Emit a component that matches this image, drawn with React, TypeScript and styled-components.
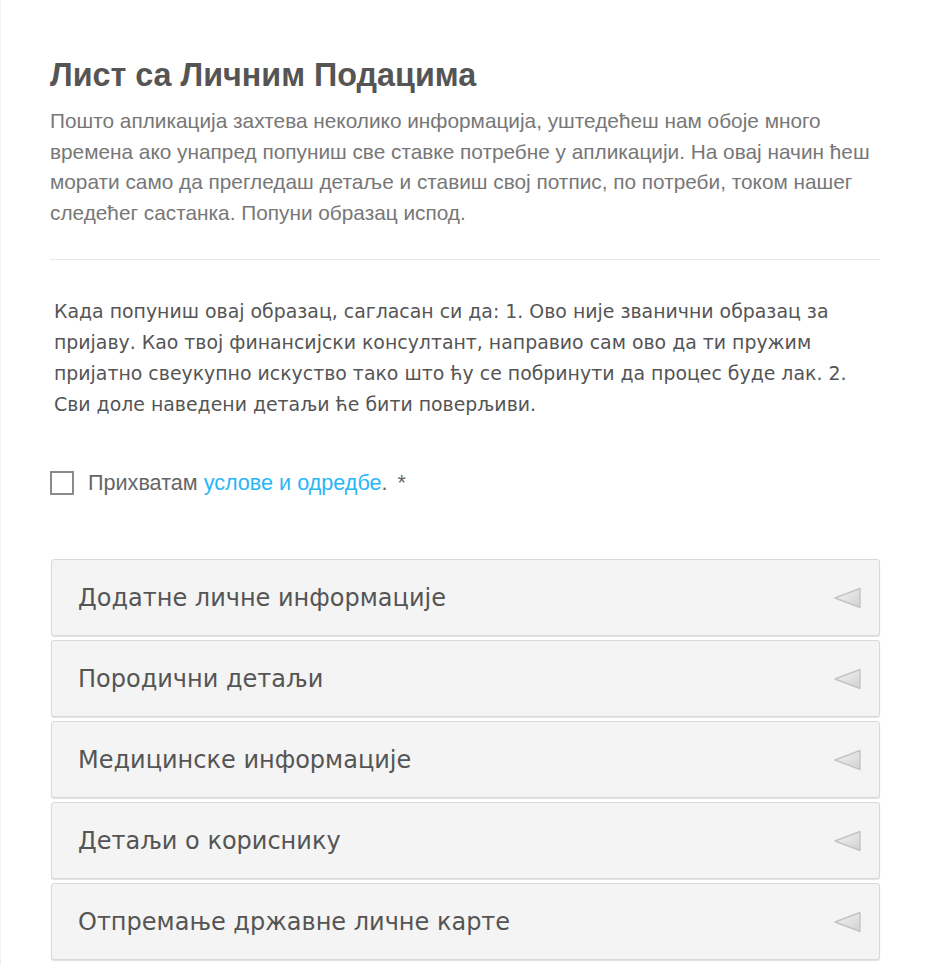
import styled, { createGlobalStyle } from 'styled-components';

const GlobalStyle = createGlobalStyle`
    html, body {
        margin: 0;
        padding: 0;
        background: #fff;
    }
`;

const Page = styled.div`
    min-height: 965px;
    box-sizing: border-box;
    border-left: 1px dotted #e6e6e6;
    padding: 57px 50px 0 49px;
    width: 930px;
`;

const Title = styled.h1`
    margin: 0;
    font-family: "Liberation Sans", Arial, sans-serif;
    font-weight: 700;
    font-size: 32.3px;
    line-height: 36px;
    color: #555;
`;

const Intro = styled.p`
    margin: 13px 0 0;
    font-family: "Liberation Sans", Arial, sans-serif;
    font-size: 20.8px;
    line-height: 30.5px;
    color: #777;
`;

const Divider = styled.hr`
    margin: 31px 0 0;
    border: none;
    border-top: 1px solid #e8e8e8;
`;

const Terms = styled.p`
    margin: 36px 0 0;
    padding-left: 4px;
    font-family: "DejaVu Sans", Verdana, sans-serif;
    font-size: 18.9px;
    line-height: 31px;
    color: #555;
`;

const AgreeRow = styled.label`
    display: flex;
    align-items: center;
    gap: 14px;
    margin-top: 51px;
    font-family: "Liberation Sans", Arial, sans-serif;
    font-size: 21.6px;
    line-height: 24px;
    color: #666;
`;

const Box = styled.span`
    width: 20px;
    height: 20px;
    border: 2px solid #8a8a8a;
    background: #fff;
    flex: none;
`;

const TermsLink = styled.a`
    color: #29b6f6;
    text-decoration: none;
`;

const Star = styled.span`
    margin-left: 10px;
`;

const Accordion = styled.div`
    display: flex;
    flex-direction: column;
    gap: 4px;
    margin-top: 64px;
    padding-left: 1px;
`;

const Panel = styled.div`
    display: flex;
    align-items: center;
    justify-content: space-between;
    height: 75px;
    padding: 0 16px 0 26px;
    background: #f4f4f4;
    border: 1px solid #d9d9d9;
    border-radius: 3px;
    box-shadow: 0 1px 1px rgba(0, 0, 0, 0.12);
    font-family: "DejaVu Sans", Verdana, sans-serif;
    font-size: 24px;
    color: #555;
    cursor: pointer;
`;

const Arrow = () => (
    <svg width="30" height="24" viewBox="0 0 30 24">
        <defs>
            <linearGradient id="arr" x1="0" y1="0" x2="1" y2="1">
                <stop offset="0" stopColor="#f6f6f6" />
                <stop offset="1" stopColor="#d0d0d0" />
            </linearGradient>
        </defs>
        <path d="M2 12 L27 2.5 L27 21.5 Z" fill="url(#arr)" stroke="#c4c4c4" strokeWidth="1.4" strokeLinejoin="round" />
    </svg>
);

const sections = [
    'Додатне личне информације',
    'Породични детаљи',
    'Медицинске информације',
    'Детаљи о кориснику',
    'Отпремање државне личне карте',
];

export default function App() {
    return (
        <>
            <GlobalStyle />
            <Page>
                <Title>Лист са Личним Подацима</Title>
                <Intro>
                    Пошто апликација захтева неколико информација, уштедећеш нам обоје много
                    времена ако унапред попуниш све ставке потребне у апликацији. На овај начин ћеш
                    морати само да прегледаш детаље и ставиш свој потпис, по потреби, током нашег
                    следећег састанка. Попуни образац испод.
                </Intro>
                <Divider />
                <Terms>
                    Када попуниш овај образац, сагласан си да: 1. Ово није званични образац за
                    пријаву. Као твој финансијски консултант, направио сам ово да ти пружим
                    пријатно свеукупно искуство тако што ћу се побринути да процес буде лак. 2.
                    Сви доле наведени детаљи ће бити поверљиви.
                </Terms>
                <AgreeRow>
                    <Box />
                    <span>
                        Прихватам <TermsLink href="#">услове и одредбе</TermsLink>.<Star>*</Star>
                    </span>
                </AgreeRow>
                <Accordion>
                    {sections.map((s) => (
                        <Panel key={s}>
                            <span>{s}</span>
                            <Arrow />
                        </Panel>
                    ))}
                </Accordion>
            </Page>
        </>
    );
}
